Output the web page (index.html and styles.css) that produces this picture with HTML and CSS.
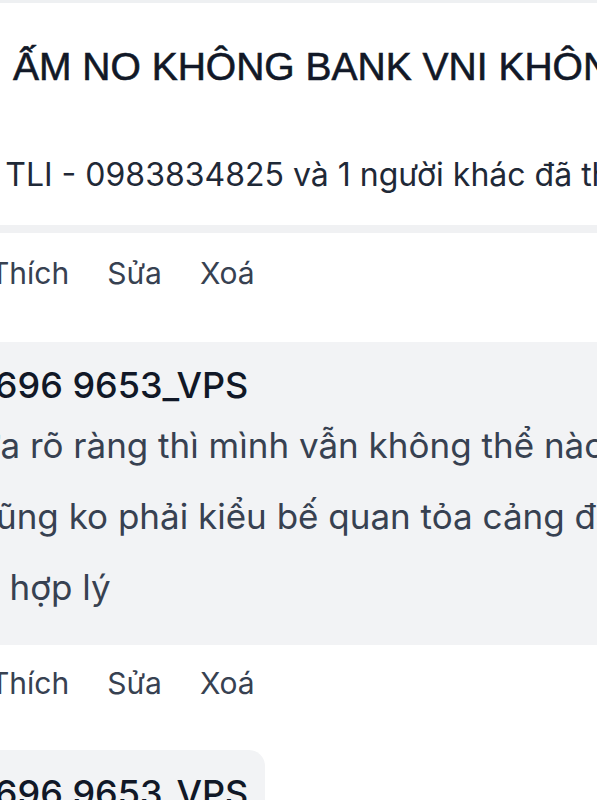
FILE: index.html
```html
<!DOCTYPE html>
<html lang="vi">
<head>
    <meta charset="utf-8" />
    <link rel="stylesheet" href="styles.css">
</head>
<body>
    <div class="viewport">
        <div class="thread">
            <div class="post-head">
                <h1 class="post-title">ĂN ẤM NO KHÔNG BANK VNI KHÔNG TĂNG NỔI</h1>
                <div class="post-likes">Hoa TLI - 0983834825 và 1 người khác đã thích</div>
            </div>
            <div class="post-sep"></div>

            <div class="actions">
                <span>Thích</span>
                <span>Sửa</span>
                <span>Xoá</span>
            </div>

            <div class="comment">
                <div class="comment-author">Vũ 696 9653_VPS</div>
                <div class="comment-text">
                    <span class="line">chưa rõ ràng thì mình vẫn không thể nào hiểu được</span>
                    <span class="line">ai cũng ko phải kiểu bế quan tỏa cảng đâu nên</span>
                    <span class="line">thôi hợp lý</span>
                </div>
            </div>

            <div class="actions">
                <span>Thích</span>
                <span>Sửa</span>
                <span>Xoá</span>
            </div>

            <div class="comment comment-short">
                <div class="comment-author">Vũ 696 9653_VPS</div>
                <div class="comment-text">
                    <span class="line">đồng ý</span>
                </div>
            </div>
        </div>
    </div>
</body>
</html>
```

FILE: styles.css
```css
body {
    margin: 0;
    background: #fff;
    font-family: Inter, "Noto Sans", sans-serif;
    overflow: hidden;
}

.viewport {
    margin-right: 3px;
    height: 800px;
    overflow: hidden;
    border-top: 3px solid #eef0f2;
}

.thread {
    margin-left: -80px;
    margin-right: -40px;
}

.post-head {
    padding-left: 24px;
}

.post-title {
    margin: 0;
    padding-top: 39px;
    padding-left: 4px;
    font-family: "Liberation Sans", Arial, sans-serif;
    font-size: 39px;
    font-weight: normal;
    line-height: 50px;
    color: #111827;
    -webkit-text-stroke: 0.6px #111827;
    white-space: nowrap;
}

.post-likes {
    margin-top: 63px;
    margin-left: -9px;
    font-size: 32px;
    line-height: 40px;
    color: #1f2937;
    white-space: nowrap;
}

.post-sep {
    height: 8px;
    margin-top: 30px;
    background: #f0f1f3;
}

.actions {
    display: flex;
    gap: 38px;
    padding-left: 70px;
    margin-top: 20px;
    font-size: 30px;
    line-height: 40px;
    color: #374151;
}

.comment {
    box-sizing: border-box;
    margin-top: 49px;
    padding: 23px 24px 22px 18px;
    background: #f2f3f5;
    border-radius: 16px;
    white-space: nowrap;
}

.comment-author {
    font-size: 36px;
    font-weight: 500;
    line-height: 40px;
    color: #111827;
}

.comment-text {
    margin-top: 5px;
    font-size: 35px;
    line-height: 71px;
    color: #374151;
}

.comment-text .line {
    display: block;
}

.comment + .actions {
    margin-top: 18px;
}

.comment-short {
    width: 345px;
    margin-top: 47px;
}
```
